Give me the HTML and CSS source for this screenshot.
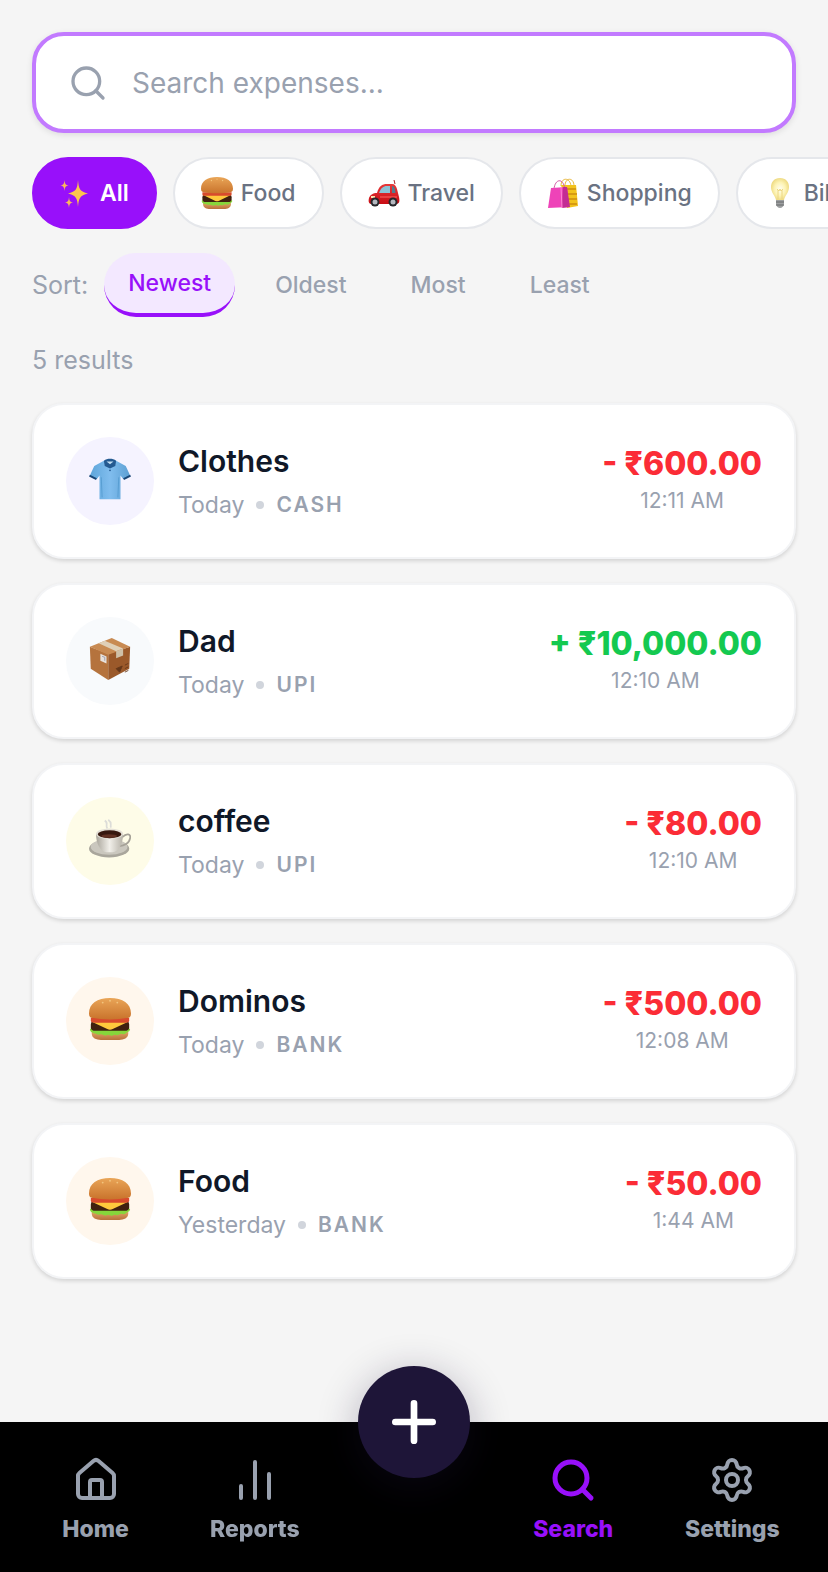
FILE: index.html
```
<!DOCTYPE html>
<html lang="en">
	<head>
		<meta charset="UTF-8">
		<meta name="viewport" content="width=device-width, initial-scale=1.0">
		<title>Search expenses</title>
		<link rel="stylesheet" href="styles.css">
	</head>
	<body>
		<!-- shared drawings -->
		<svg class="defs" aria-hidden="true">
			<defs>
				<linearGradient id="bun" x1="0" y1="0" x2="0" y2="1">
					<stop offset="0" stop-color="#e9a557"/>
					<stop offset="1" stop-color="#c9732c"/>
				</linearGradient>
				<linearGradient id="bunLow" x1="0" y1="0" x2="0" y2="1">
					<stop offset="0" stop-color="#e7b070"/>
					<stop offset="1" stop-color="#b9713a"/>
				</linearGradient>
				<linearGradient id="shirt" x1="0" y1="0" x2="1" y2="0">
					<stop offset="0" stop-color="#5ea5da"/>
					<stop offset="0.5" stop-color="#80bdee"/>
					<stop offset="1" stop-color="#5c9fd3"/>
				</linearGradient>
				<linearGradient id="cup" x1="0" y1="0" x2="1" y2="0">
					<stop offset="0" stop-color="#a9a59b"/>
					<stop offset="0.5" stop-color="#f1efe9"/>
					<stop offset="1" stop-color="#b5b1a7"/>
				</linearGradient>
				<radialGradient id="bulb">
					<stop offset="0" stop-color="#fffef0"/>
					<stop offset="0.6" stop-color="#fdf3b4"/>
					<stop offset="1" stop-color="#efdc86"/>
				</radialGradient>
				<linearGradient id="car" x1="0" y1="0" x2="0" y2="1">
					<stop offset="0" stop-color="#e8393a"/>
					<stop offset="1" stop-color="#c80d14"/>
				</linearGradient>
			</defs>
			<symbol id="burger" viewBox="1 1 46 46">
				<path d="M4 36h40v4c0 5-5 7-10 7H14c-5 0-10-2-10-7z" fill="url(#bunLow)"/>
				<path d="M2 35c3-3 41-3 44 0 0 3-3 3-5 5-3 2-4-1-7 1-3 2-4-1-7 1-3 1-4-2-7 0-3 1-4-2-7-1-3 1-4-2-6-1-3-1-5-2-5-5z" fill="#86d63b"/>
				<path d="M3 30c0-3 2-4 5-4h32c3 0 5 1 5 4v3c0 3-2 4-5 4H8c-3 0-5-1-5-4z" fill="#40210f"/>
				<path d="M4 27h40L27 35c-2 1-4 1-6 0z" fill="#ffc93c"/>
				<path d="M3 23h42v3c0 2-2 2-4 2H7c-2 0-4 0-4-2z" fill="#d84a2c"/>
				<path d="M1 18C1 7 10 1 24 1s23 6 23 17c0 4-2 5-5 5-9 2-27 2-36 0-3 0-5-1-5-5z" fill="url(#bun)"/>
				<g fill="#f2c47e">
					<circle cx="16" cy="6" r="1"/><circle cx="24" cy="4" r="1"/><circle cx="32" cy="6" r="1"/>
				</g>
			</symbol>
			<symbol id="search" viewBox="0 0 24 24">
				<circle cx="11" cy="11" r="8"/>
				<path d="m21 21-4.34-4.34"/>
			</symbol>
		</svg>

		<main class="page">
			<label class="search-box">
				<svg class="line-icon search-icon" aria-hidden="true"><use href="#search"/></svg>
				<input class="search-input" type="text" placeholder="Search expenses..." aria-label="Search expenses">
			</label>

			<div class="chips">
				<button type="button" class="chip chip-active">
					<svg class="emoji" viewBox="0 0 32 32" aria-hidden="true">
						<path d="M18 3c.7 9 1.900 11.500 10 13.500-8.100 2-9.300 4.500-10 13.500-.7-9-1.900-11.500-10-13.500 8.100-2 9.300-4.500 10-13.500z" fill="#fcc44c"/>
						<path d="M4.500 3c.4 4 1 5 4 5.500-3 .5-3.600 1.500-4 5.500-.4-4-1-5-4-5.500 3-.5 3.600-1.500 4-5.500z" fill="#fbb75c"/>
						<path d="M9 20c.4 4 1 5 4 5.500-3 .5-3.600 1.500-4 5.500-.4-4-1-5-4-5.500 3-.5 3.600-1.500 4-5.500z" fill="#fbb75c"/>
					</svg>
					All
				</button>
				<button type="button" class="chip">
					<svg class="emoji" aria-hidden="true"><use href="#burger"/></svg>
					Food
				</button>
				<button type="button" class="chip">
					<svg class="emoji" viewBox="0 0 32 32" aria-hidden="true">
						<path d="M26 3l1 4" stroke="#b32025" fill="none"/>
						<path d="M9 16c2-7 5-9 10-9h5c3 0 4 2 5 5l2 8c1 5 0 7-3 7H4c-3 0-4-2-3-6 1-3 4-5 8-5z" fill="url(#car)"/>
						<path d="M11 16c2-5 4-7 8-7h3v7z" fill="#8cc3d6"/>
						<path d="M24 9c2 0 3 2 3.500 7H24z" fill="#527c8e"/>
						<path d="M3 20h4" stroke="#ffe3b0" stroke-width="2"/>
						<path d="M12 20h17" stroke="#ff6460" fill="none"/>
						<g fill="#26272b"><circle cx="7" cy="25" r="4.500"/><circle cx="25" cy="25" r="4.500"/></g>
						<g fill="#b4b8bf"><circle cx="7" cy="25" r="2.500"/><circle cx="25" cy="25" r="2.500"/></g>
					</svg>
					Travel
				</button>
				<button type="button" class="chip">
					<svg class="emoji" viewBox="0 0 32 32" aria-hidden="true">
						<path d="M14 9c0-9 9-9 10 0M18 9c0-9 9-9 9 0" stroke="#e8b83e" fill="none"/>
						<path d="M14 8h15l2 21-11 2z" fill="#f2c21c"/>
						<path d="M19 12h10M19 17h11M19 22h11M19 27h11" stroke="#d79a12" stroke-width="2"/>
						<path d="M7 12c1-10 9-12 11 0" stroke="#d457a6" fill="none"/>
						<path d="M4 11l16-1 2 20-21 1z" fill="#ee43b8"/>
						<path d="M16 10l4 0 3 20-8 1z" fill="#c32b93"/>
						<path d="M14 10l1 21" stroke="#ff83d4"/>
					</svg>
					Shopping
				</button>
				<button type="button" class="chip">
					<svg class="emoji" viewBox="0 0 32 32" aria-hidden="true">
						<path d="M16 1c6 0 9 4 9 9 0 6-4 8-5 13h-8C11 18 7 16 7 10c0-5 3-9 9-9z" fill="url(#bulb)"/>
						<path d="M13 12l2 2 1-2 1 2 2-2M14 13v9M18 13v9" stroke="#ecd680" fill="none"/>
						<path d="M12 23h8v4c0 2-2 4-4 4s-4-2-4-4z" fill="#9ea0a1"/>
						<path d="M12 25h8M12 28h8" stroke="#66686b"/>
					</svg>
					Bills
				</button>
			</div>

			<div class="sort">
				<span class="sort-label">Sort:</span>
				<button type="button" class="sort-btn sort-active">Newest</button>
				<button type="button" class="sort-btn">Oldest</button>
				<button type="button" class="sort-btn">Most</button>
				<button type="button" class="sort-btn">Least</button>
			</div>

			<p class="count">5 results</p>

			<ul class="list">
				<li class="card">
					<span class="avatar avatar-violet">
						<svg class="avatar-icon" viewBox="0 0 48 48" aria-hidden="true">
							<path d="M17 3h14l11 6 5 11-8 4-3-4v27H12V20l-3 4-8-4 5-11z" fill="url(#shirt)"/>
							<path d="M1 19l8 4-1 2-8-4zM47 19l-8 4 1 2 8-4z" fill="#194777"/>
							<path d="M17 3c4-3 10-3 14 0l-1 6-6 3-6-3z" fill="#245a91"/>
							<path d="M20 4h8l-4 3z" fill="#c4e0f4"/>
							<circle cx="24" cy="14" r="1" fill="#245a91"/>
							<path d="M14 22l1 23M34 22l-1 23" stroke="#559bd0" fill="none"/>
						</svg>
					</span>
					<div class="info">
						<h2 class="name">Clothes</h2>
						<p class="meta"><span>Today</span><i class="dot"></i><b class="method">CASH</b></p>
					</div>
					<div class="amount">
						<strong class="money spent">- ₹600.00</strong>
						<time class="time">12:11 AM</time>
					</div>
				</li>
				<li class="card">
					<span class="avatar avatar-slate">
						<svg class="avatar-icon" viewBox="0 0 48 48" aria-hidden="true">
							<path d="M1 10l21 8v30L2 35z" fill="#b5733d"/>
							<path d="M22 18l25-8-1 25-24 13z" fill="#9b592a"/>
							<path d="M1 10L26 0l21 10-25 9z" fill="#c88a52"/>
							<path d="M11 6l7-3 21 9-8 3z" fill="#dfcfb7"/>
							<path d="M31 15l8-3v8l-8 3z" fill="#cfc0a8"/>
							<path d="M13 18l7 3v8l-7-3z" fill="#e8e2dc"/>
							<path d="M15 21l3 1v4" stroke="#9998a8" fill="none"/>
							<path d="M31 35l7-3-3 7zM41 31l4-2M41 35l4-2M41 39l4-2" stroke="#653719" fill="#653719"/>
						</svg>
					</span>
					<div class="info">
						<h2 class="name">Dad</h2>
						<p class="meta"><span>Today</span><i class="dot"></i><b class="method">UPI</b></p>
					</div>
					<div class="amount">
						<strong class="money earned">+ ₹10,000.00</strong>
						<time class="time">12:10 AM</time>
					</div>
				</li>
				<li class="card">
					<span class="avatar avatar-yellow">
						<svg class="avatar-icon" viewBox="0 0 48 48" aria-hidden="true">
							<path d="M21 12c-3-4 2-6-3-9M25 11c-1-5 2-5-3-9" stroke="#dcdcd8" stroke-width="2" fill="none"/>
							<ellipse cx="23" cy="35" rx="23" ry="10" fill="#a9a69c"/>
							<ellipse cx="23" cy="33" rx="21" ry="9" fill="#cac7be"/>
							<path d="M38 22c5-5 10-4 9 1-1 6-7 9-12 9" stroke="#a6a298" stroke-width="2" fill="none"/>
							<path d="M8 18h31c0 11-5 21-12 21h-7C13 39 8 29 8 18z" fill="url(#cup)"/>
							<ellipse cx="23.500" cy="18" rx="15.500" ry="6" fill="#e4e0d7"/>
							<ellipse cx="23.500" cy="18.500" rx="13.500" ry="4.500" fill="#36180f"/>
							<ellipse cx="23" cy="20.500" rx="9" ry="2" fill="#603123"/>
						</svg>
					</span>
					<div class="info">
						<h2 class="name">coffee</h2>
						<p class="meta"><span>Today</span><i class="dot"></i><b class="method">UPI</b></p>
					</div>
					<div class="amount">
						<strong class="money spent">- ₹80.00</strong>
						<time class="time">12:10 AM</time>
					</div>
				</li>
				<li class="card">
					<span class="avatar avatar-orange">
						<svg class="avatar-icon" aria-hidden="true"><use href="#burger"/></svg>
					</span>
					<div class="info">
						<h2 class="name">Dominos</h2>
						<p class="meta"><span>Today</span><i class="dot"></i><b class="method">BANK</b></p>
					</div>
					<div class="amount">
						<strong class="money spent">- ₹500.00</strong>
						<time class="time">12:08 AM</time>
					</div>
				</li>
				<li class="card">
					<span class="avatar avatar-orange">
						<svg class="avatar-icon" aria-hidden="true"><use href="#burger"/></svg>
					</span>
					<div class="info">
						<h2 class="name">Food</h2>
						<p class="meta"><span>Yesterday</span><i class="dot"></i><b class="method">BANK</b></p>
					</div>
					<div class="amount">
						<strong class="money spent">- ₹50.00</strong>
						<time class="time">1:44 AM</time>
					</div>
				</li>
			</ul>
		</main>

		<nav class="nav">
			<a class="nav-link" href="#home">
				<svg class="line-icon nav-icon" viewBox="0 0 24 24" aria-hidden="true">
					<path d="M15 21v-8a1 1 0 0 0-1-1h-4a1 1 0 0 0-1 1v8"/>
					<path d="M3 10a2 2 0 0 1 .709-1.528l7-5.999a2 2 0 0 1 2.582 0l7 5.999A2 2 0 0 1 21 10v9a2 2 0 0 1-2 2H5a2 2 0 0 1-2-2z"/>
				</svg>
				Home
			</a>
			<a class="nav-link" href="#reports">
				<svg class="line-icon nav-icon" viewBox="0 0 24 24" aria-hidden="true">
					<path d="M5 21v-6M12 21V3M19 21V9"/>
				</svg>
				Reports
			</a>
			<button type="button" class="add" aria-label="Add expense">
				<svg class="line-icon add-icon" viewBox="0 0 24 24" aria-hidden="true">
					<path d="M5 12h14M12 5v14"/>
				</svg>
			</button>
			<a class="nav-link nav-active" href="#search-page">
				<svg class="line-icon nav-icon" aria-hidden="true"><use href="#search"/></svg>
				Search
			</a>
			<a class="nav-link" href="#settings">
				<svg class="line-icon nav-icon" viewBox="0 0 24 24" aria-hidden="true">
					<path d="M9.671 4.136a2.340 2.340 0 0 1 4.659 0 2.340 2.340 0 0 0 3.319 1.915 2.340 2.340 0 0 1 2.330 4.033 2.340 2.340 0 0 0 0 3.831 2.340 2.340 0 0 1-2.330 4.033 2.340 2.340 0 0 0-3.319 1.915 2.340 2.340 0 0 1-4.659 0 2.340 2.340 0 0 0-3.320-1.915 2.340 2.340 0 0 1-2.330-4.033 2.340 2.340 0 0 0 0-3.831A2.340 2.340 0 0 1 6.350 6.051a2.340 2.340 0 0 0 3.319-1.915"/>
					<circle cx="12" cy="12" r="3"/>
				</svg>
				Settings
			</a>
		</nav>
	</body>
</html>
```
FILE: styles.css
```
*{
	box-sizing: border-box;
}
body{
	margin: 0;
	background-color: #f5f5f5;
	color: #101828;
	font-family: "Inter", "Noto Sans", sans-serif;
}
button, input{
	font-family: inherit;
}
button{
	border: none;
	background: none;
	cursor: pointer;
}
h2, p, ul{
	margin: 0;
	padding: 0;
}
.defs{
	position: absolute;
	width: 0;
	height: 0;
}
.line-icon{
	fill: none;
	stroke: currentColor;
	stroke-width: 2;
	stroke-linecap: round;
	stroke-linejoin: round;
}
.page{
	display: flex;
	flex-direction: column;
	gap: 24px;
	padding: 32px 32px 180px;
}

/* search field */
.search-box{
	display: flex;
	align-items: center;
	gap: 24px;
	padding: 26px 32px;
	border: 4px solid #c27aff;
	border-radius: 32px;
	background-color: #fff;
	color: #99a1af;
	box-shadow: 0 2px 6px rgba(0, 0, 0, 0.1);
}
.search-icon{
	flex: none;
	width: 40px;
	height: 40px;
}
.search-input{
	flex: 1;
	min-width: 0;
	height: 41px;
	padding: 0;
	border: none;
	outline: none;
	background: none;
	color: #101828;
	font-size: 28px;
}
.search-input::placeholder{
	color: #99a1af;
	opacity: 1;
}

/* category chips */
.chips{
	display: flex;
	gap: 16px;
	margin-right: -32px;
	overflow-x: auto;
	scrollbar-width: none;
}
.chip{
	display: flex;
	flex: none;
	align-items: center;
	gap: 8px;
	padding: 18px 26px;
	border: 2px solid #e5e7eb;
	border-radius: 36px;
	background-color: #fff;
	color: #6a7282;
	font-size: 23px;
	font-weight: 500;
	line-height: 32px;
}
.chip-active{
	border-color: #9810fa;
	background-color: #9810fa;
	color: #fff;
	font-weight: 600;
}
.emoji{
	width: 32px;
	height: 32px;
}

/* sorting */
.sort{
	display: flex;
	align-items: center;
	gap: 16px;
	color: #99a1af;
}
.sort-label{
	font-size: 25px;
}
.sort-btn{
	padding: 12px 24px;
	border-radius: 32px;
	color: #99a1af;
	font-size: 23px;
	font-weight: 500;
	line-height: 36px;
}
.sort-active{
	border-bottom: 4px solid #9810fa;
	background-color: #f3e8ff;
	color: #9810fa;
}
.count{
	color: #99a1af;
	font-size: 25px;
	line-height: 38px;
}

/* expense cards */
.list{
	display: flex;
	flex-direction: column;
	gap: 24px;
	list-style: none;
}
.card{
	display: flex;
	align-items: center;
	gap: 24px;
	padding: 32px;
	border: 2px solid #f3f4f6;
	border-radius: 32px;
	background-color: #fff;
	box-shadow: 0 2px 4px rgba(0, 0, 0, 0.14);
}
.avatar{
	display: flex;
	flex: none;
	align-items: center;
	justify-content: center;
	width: 88px;
	height: 88px;
	padding-bottom: 4px;
	border-radius: 50%;
}
.avatar-violet{
	background-color: #f5f3ff;
}
.avatar-slate{
	background-color: #f8fafc;
}
.avatar-yellow{
	background-color: #fefce8;
}
.avatar-orange{
	background-color: #fff7ed;
}
.avatar-icon{
	width: 42px;
	height: 42px;
}
.info{
	flex: 1;
	min-width: 0;
}
.name{
	font-size: 30px;
	font-weight: 600;
	line-height: 48px;
}
.meta{
	display: flex;
	align-items: center;
	gap: 12px;
	color: #99a1af;
	font-size: 23px;
	line-height: 40px;
}
.dot{
	width: 8px;
	height: 8px;
	border-radius: 50%;
	background-color: #d1d5dc;
}
.method{
	font-size: 21px;
	font-weight: 600;
	letter-spacing: 2px;
}
.amount{
	display: flex;
	flex-direction: column;
	align-items: center;
}
.money{
	font-size: 32px;
	font-weight: 800;
	line-height: 40px;
}
.spent{
	color: #fb2c36;
}
.earned{
	color: #14c950;
}
.time{
	color: #99a1af;
	font-size: 21px;
	line-height: 34px;
}

/* bottom bar */
.nav{
	display: grid;
	grid-template-columns: repeat(5, 1fr);
	justify-items: center;
	align-items: start;
	position: fixed;
	right: 0;
	bottom: 0;
	left: 0;
	padding: 34px 16px 26px;
	background-color: #000;
}
.nav-link{
	display: flex;
	flex-direction: column;
	align-items: center;
	gap: 8px;
	color: #99a1af;
	font-size: 23px;
	font-weight: 800;
	line-height: 34px;
	text-decoration: none;
}
.nav-active{
	color: #9810fa;
}
.nav-icon{
	width: 48px;
	height: 48px;
}
.nav-active .nav-icon{
	stroke-width: 2.5;
}
.add{
	display: flex;
	align-items: center;
	justify-content: center;
	width: 112px;
	height: 112px;
	margin-top: -90px;
	padding: 0;
	border-radius: 50%;
	background-color: #1e1538;
	color: #fff;
	box-shadow: 0 8px 40px rgba(30, 21, 56, 0.3);
}
.add-icon{
	width: 64px;
	height: 64px;
	stroke-width: 2.5;
}
```
